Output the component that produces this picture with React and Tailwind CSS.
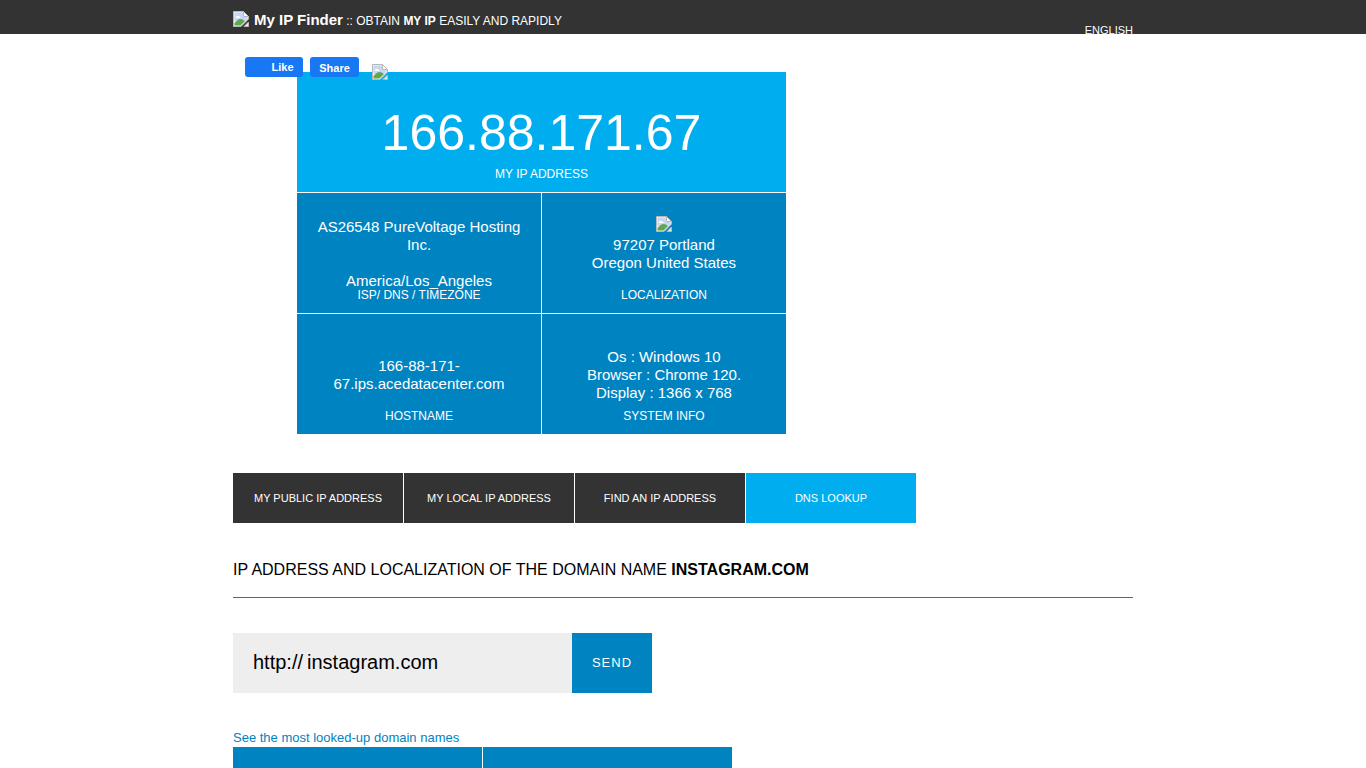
function BrokenImage() {
  return (
    <svg width="16" height="16" viewBox="0 0 16 16" className="block shrink-0" aria-hidden="true">
      <path d="M0.5 0.5H10.5L15.5 5.5V8L8 15.5H0.5Z" fill="#f4f4f4" stroke="#b8b8b8" />
      <path d="M1.500 1.500H10V6H14.500V7.500L12 10H1.500Z" fill="#c6d6f6" />
      <path d="M3 6.500C3 5 5 4.200 5.700 5.500C7 5.300 7.500 6 7.300 7H3Z" fill="#fff" />
      <path d="M1.500 14.500V12C3.500 10 5.500 8 7.500 8C9.500 8 11 9.200 11.800 10.200L7.500 14.500Z" fill="#5fa84c" />
      <path d="M10.500 0.500V5.500H15.500Z" fill="#fff" stroke="#b8b8b8" />
      <path d="M15.500 11V15.500H11Z" fill="#e8f0e4" stroke="#b8b8b8" />
    </svg>
  );
}

function InfoCell({ label, children }) {
  return (
    <div className="flex h-[120px] flex-col items-center bg-[#0083c1] text-center text-white">
      <div className="flex h-[97px] flex-col items-center justify-end px-5 text-[15px] leading-[18px]">
        {children}
      </div>
      <div className="-mt-[2px] text-xs leading-[14px]">{label}</div>
    </div>
  );
}

const tabs = ["MY PUBLIC IP ADDRESS", "MY LOCAL IP ADDRESS", "FIND AN IP ADDRESS", "DNS LOOKUP"];

export default function App() {
  return (
    <div className="h-screen overflow-hidden bg-white font-['Liberation_Sans',Arial,sans-serif] text-black">
      <header className="h-[34px] bg-[#333333] text-white">
        <div className="mx-auto flex h-full max-w-[900px] justify-between">
          <h1 className="flex items-start gap-[5px] pt-[11px]">
            <BrokenImage />
            <span className="text-xs leading-[18px]">
              <b className="text-[15px]">My IP Finder</b> :: OBTAIN <b>MY IP</b> EASILY AND RAPIDLY
            </span>
          </h1>
          <a href="#english" className="pt-6 text-[11px] leading-3">ENGLISH</a>
        </div>
      </header>

      <main className="relative mx-auto max-w-[900px] pt-[38px]">
        <div className="absolute left-3 top-[23px] flex items-start text-[11px] font-bold leading-5 text-white">
          <button className="h-5 w-[58px] rounded-[3px] bg-[#1877f2] pl-[17px]">Like</button>
          <button className="ml-[7px] h-5 w-[49px] rounded-[3px] bg-[#1877f2] pt-px">Share</button>
          <div className="ml-[13px] mt-[7px]"><BrokenImage /></div>
        </div>

        <section className="ml-16 grid w-[489px] grid-cols-2 gap-px">
          <div className="col-span-2 flex h-[120px] flex-col items-center bg-[#00aeef] pt-[31px] text-white">
            <div className="text-[50px] leading-[60px]">166.88.171.67</div>
            <div className="mt-1 text-xs leading-[14px]">MY IP ADDRESS</div>
          </div>
          <InfoCell label="ISP/ DNS / TIMEZONE">
            <p>AS26548 PureVoltage Hosting Inc.</p>
            <p className="mt-[18px]">America/Los_Angeles</p>
          </InfoCell>
          <InfoCell label="LOCALIZATION">
            <div className="mb-1"><BrokenImage /></div>
            <p className="mb-[18px]">97207 Portland<br />Oregon United States</p>
          </InfoCell>
          <InfoCell label="HOSTNAME">
            <p className="mb-[18px]">166-88-171-<br />67.ips.acedatacenter.com</p>
          </InfoCell>
          <InfoCell label="SYSTEM INFO">
            <p className="mb-[9px]">Os : Windows 10<br />Browser : Chrome 120.<br />Display : 1366 x 768</p>
          </InfoCell>
        </section>

        <nav className="mt-[39px] flex gap-px text-[11px] text-white">
          {tabs.map((tab, i) => (
            <a
              key={tab}
              href="#tab"
              className={`flex h-[50px] w-[170px] items-center justify-center ${i === 3 ? "bg-[#00aeef]" : "bg-[#333333]"}`}
            >
              {tab}
            </a>
          ))}
        </nav>

        <h2 className="mt-[37px] border-b border-[#0083c1] pb-[17px] text-base leading-5">
          IP ADDRESS AND LOCALIZATION OF THE DOMAIN NAME <b>INSTAGRAM.COM</b>
        </h2>

        <form className="mt-[35px] flex h-[60px]" onSubmit={(e) => e.preventDefault()}>
          <div className="flex w-[339px] items-center bg-[#eeeeee] pb-[2px] pl-5 text-xl">
            <label htmlFor="domain">http://</label>
            <input
              id="domain"
              type="text"
              defaultValue="instagram.com"
              className="ml-1 min-w-0 flex-1 bg-transparent outline-none"
            />
          </div>
          <button className="w-20 bg-[#0083c1] text-[13px] tracking-[1px] text-white">SEND</button>
        </form>

        <a href="#domains" className="mt-9 block text-[13px] leading-[18px] text-[#0083c1]">
          See the most looked-up domain names
        </a>
        <div className="grid w-[499px] grid-cols-2 gap-px">
          <div className="h-[120px] bg-[#0083c1]" />
          <div className="h-[120px] bg-[#0083c1]" />
        </div>
      </main>
    </div>
  );
}
